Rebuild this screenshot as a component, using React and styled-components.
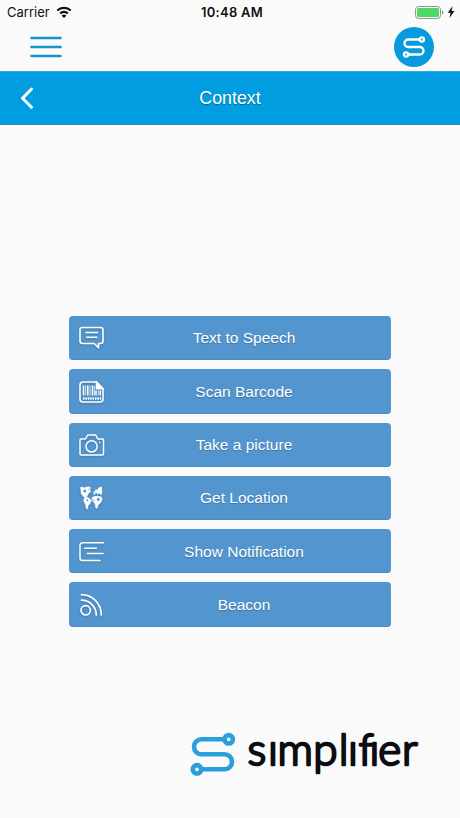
import React from 'react';
import styled, { createGlobalStyle } from 'styled-components';

const GlobalStyle = createGlobalStyle`
  * {
    box-sizing: border-box;
  }

  body {
    margin: 0;
    background: #fafafa;
    font-family: "Liberation Sans", Arial, sans-serif;
  }
`;

const Screen = styled.div`
  display: flex;
  flex-direction: column;
  width: 460px;
  height: 818px;
  overflow: hidden;
  background: #fafafa;
`;

const StatusBar = styled.div`
  display: grid;
  grid-template-columns: 1fr auto 1fr;
  align-items: center;
  height: 24px;
  padding: 0 5px 0 7px;
  color: #111;
  font-family: Inter, sans-serif;
  font-size: 13px;
  line-height: 24px;
`;

const Carrier = styled.div`
  display: flex;
  align-items: center;
  gap: 6px;
`;

const Clock = styled.div`
  padding-left: 2px;
  font-weight: 600;
  letter-spacing: 0.25px;
`;

const Power = styled.div`
  display: flex;
  align-items: center;
  justify-content: flex-end;
  gap: 3px;
`;

const TopBar = styled.header`
  display: flex;
  align-items: center;
  justify-content: space-between;
  height: 47px;
  padding: 0 26px 1px 30px;
`;

const PlainButton = styled.button`
  display: flex;
  padding: 0;
  border: 0;
  background: none;
`;

const Badge = styled.div`
  display: flex;
  align-items: center;
  justify-content: center;
  width: 40px;
  height: 40px;
  border-radius: 50%;
  background: #079bdb;
`;

const TitleBar = styled.div`
  display: grid;
  grid-template-columns: 40px 1fr 40px;
  align-items: center;
  height: 54px;
  border-top: 1px solid #35a9d8;
  border-bottom: 1px solid #3f87ab;
  background: #009de0;
`;

const BackButton = styled(PlainButton)`
  padding-left: 20px;
`;

const Title = styled.h1`
  margin: 0;
  color: #fff;
  font-size: 17.8px;
  font-weight: 400;
  text-align: center;
  text-shadow: 0 1px 1px rgba(0, 0, 0, 0.35);
`;

const Actions = styled.main`
  display: flex;
  flex-direction: column;
  gap: 9px;
  padding: 191px 69px 0;
`;

const Action = styled.button`
  display: grid;
  grid-template-columns: 28px 1fr;
  align-items: center;
  height: 44.3px;
  padding: 1.5px 9px 0;
  border: 0;
  border-bottom: 1px solid #4a8cc5;
  border-radius: 4px;
  background: #5396cf;
  color: #fff;
  font-family: inherit;
  font-size: 15.5px;
  text-shadow: 0 1px 1px rgba(0, 0, 0, 0.25);

  svg {
    filter: drop-shadow(0 1px 1px rgba(0, 0, 0, 0.2));
  }
`;

const Footer = styled.footer`
  display: flex;
  justify-content: flex-end;
  margin-top: auto;
  padding: 0 30px 26px 0;
`;

const Line = styled.svg`
  display: block;
  fill: none;
  stroke: ${props => props.$color || '#fff'};
  stroke-width: ${props => props.$weight || 1.6};
  stroke-linecap: round;
  stroke-linejoin: round;
`;

const Wordmark = styled.text`
  fill: #0b0d12;
  stroke: #0b0d12;
  stroke-width: 2.5px;
  font-family: Lato, sans-serif;
  font-size: 44px;
  font-weight: 300;
  font-variant-ligatures: none;
`;

const SpeechIcon = () => (
  <Line width="28" height="28" viewBox="0 0 28 28">
    <path d="M4.500 3.500h18a2.500 2.500 0 0 1 2.500 2.500v11a2.500 2.500 0 0 1-2.500 2.500h-2v4.300l-4.300-4.300H4.500A2.500 2.500 0 0 1 2 17V6a2.500 2.500 0 0 1 2.500-2.500z" />
    <path d="M8 8.500h11.500M8.800 13.300h10" />
  </Line>
);

const BarcodeIcon = () => (
  <Line width="28" height="28" viewBox="0 0 28 28">
    <path d="M5 4h13.500l6.500 6.700V21a3 3 0 0 1-3 3H5a3 3 0 0 1-3-3V7a3 3 0 0 1 3-3z" />
    <path d="M18.500 4v6.700H25z" fill="#fff" />
    <path d="M5.500 7.500v10M9.800 7.500v10M14.500 7.500v10M18 12.500v5M22.300 12.500v5" strokeWidth="1.500" strokeLinecap="butt" />
    <path d="M7.700 7.500v10M12.100 7.500v10M16.400 8v9.500M20.300 12.500v5" strokeWidth="0.800" strokeLinecap="butt" />
    <path d="M5 20.500h18" strokeWidth="2.400" strokeDasharray="1.500 0.900" strokeLinecap="butt" />
  </Line>
);

const CameraIcon = () => (
  <Line width="28" height="28" viewBox="0 0 28 28" $weight={1.5}>
    <path d="M3 8h4.500l2.200-4h8l2.200 4h4.600a1 1 0 0 1 1 1v14a1 1 0 0 1-1 1H3a1 1 0 0 1-1-1V9a1 1 0 0 1 1-1z" />
    <circle cx="13.600" cy="15.400" r="5.600" />
    <path d="M21.800 11.300h.1" />
  </Line>
);

const MapIcon = () => (
  <Line width="28" height="28" viewBox="0 0 28 28" $weight={0.5}>
    <g fill="#fff">
      <path d="M2.300 3.500l2.200-.6L6 4l1.700-.8 3.500-.4 1.500 1-1 2.200 1 1.500-2 1.500L9 12.200l-1 1.500-1.800-.2-3-3.700L3 6.500z" />
      <path d="M6.200 14.500l3-1.200 3 1.700 1 1.700-1.400 3-1.800 2-.5 3.300-1.200-.3-.8-4.500-1.800-3z" />
      <path d="M15.500 9l2.500-3.500 1.300 1L20.500 4l3-1.200.5 5.200-.8 3-2.200-2-1.200 1.200-1.300-1.200-2 1.500z" />
      <path d="M14.500 13.300l3.500-1.300 5.200.8 1 3-2 3.500-2 1.500-1 3.500-1.400-.3-.8-4.300-3-3.200z" />
    </g>
    <g fill="#5396cf" stroke="#fff" strokeWidth="1.100">
      <circle cx="6.800" cy="7" r="2.100" />
      <circle cx="20.300" cy="15.500" r="2" />
      <circle cx="9.300" cy="16.300" r="1.500" />
    </g>
    <path d="M3 12.500l2 2.500M10.500 5.500l.7-.7M17.300 9.500l.9-1.300M15 16l1.500.8" stroke="#5396cf" strokeWidth="0.900" />
  </Line>
);

const NotificationIcon = () => (
  <Line width="28" height="28" viewBox="0 0 28 28" $weight={1.5}>
    <path d="M25.300 4.700H4.500A2.500 2.500 0 0 0 2 7.200v12.800a2.500 2.500 0 0 0 2.500 2.500H22M6.800 10.200h11.500M9.300 15.500h15.800" />
  </Line>
);

const BeaconIcon = () => (
  <Line width="28" height="28" viewBox="0 0 28 28" $weight={1.7}>
    <circle cx="7.700" cy="19.300" r="4.700" />
    <path d="M3.500 9.200c8.200 0 14.800 6.600 14.800 14.800M3.500 3.700c11 0 19.800 9 19.800 20.300" />
  </Line>
);

const SimplifierMark = () => (
  <g>
    <path d="M34.500 7.300h-23a7.500 7.500 0 0 0 0 15h23a7.500 7.500 0 0 1 0 15H11.500" />
    <circle cx="38.700" cy="7.300" r="4.200" />
    <circle cx="7" cy="37.300" r="4.200" />
  </g>
);

const ACTIONS = [
  { label: 'Text to Speech', Icon: SpeechIcon },
  { label: 'Scan Barcode', Icon: BarcodeIcon },
  { label: 'Take a picture', Icon: CameraIcon },
  { label: 'Get Location', Icon: MapIcon },
  { label: 'Show Notification', Icon: NotificationIcon },
  { label: 'Beacon', Icon: BeaconIcon },
];

const App = () => (
  <Screen>
    <GlobalStyle />
    <StatusBar>
      <Carrier>
        Carrier
        <Line width="16" height="13" viewBox="0 0 16 13" $color="#111" $weight={2.3}>
          <path d="M1.300 4.500a9.600 9.600 0 0 1 13.400 0M4.200 7.500a5.500 5.500 0 0 1 7.600 0" strokeLinecap="butt" />
          <path d="M8 12L5.700 9.700a3.200 3.200 0 0 1 4.600 0z" fill="#111" stroke="none" />
        </Line>
      </Carrier>
      <Clock>10:48 AM</Clock>
      <Power>
        <svg width="29" height="13" viewBox="0 0 29 13">
          <rect x="0.500" y="0.500" width="25" height="12" rx="3" fill="#fafafa" stroke="#8f958f" />
          <rect x="2" y="2" width="22" height="9" rx="1.500" fill="#4cd964" />
          <path d="M27 4.500c2 .8 2 3.200 0 4z" fill="#8f958f" />
        </svg>
        <svg width="8" height="12" viewBox="0 0 8 12">
          <path d="M5.500 0L.8 6.700h2.800L2.500 12 7.500 5H4.600z" fill="#111" />
        </svg>
      </Power>
    </StatusBar>
    <TopBar>
      <PlainButton type="button" aria-label="Menu">
        <Line width="32" height="22" viewBox="0 0 32 22" $color="#1593ce" $weight={2.6}>
          <path d="M1.500 2h29M1.500 11h29M1.500 20h29" />
        </Line>
      </PlainButton>
      <Badge>
        <Line width="24" height="24" viewBox="-1 -1.700 48 48" $weight={4.6}>
          <SimplifierMark />
        </Line>
      </Badge>
    </TopBar>
    <TitleBar>
      <BackButton type="button" aria-label="Back">
        <Line width="14" height="24" viewBox="0 0 14 24" $weight={3}>
          <path d="M11.500 3L2.500 12.300l9 9" />
        </Line>
      </BackButton>
      <Title>Context</Title>
    </TitleBar>
    <Actions>
      {ACTIONS.map(({ label, Icon }) => (
        <Action key={label} type="button">
          <Icon />
          <span>{label}</span>
        </Action>
      ))}
    </Actions>
    <Footer>
      <Line width="240" height="76" viewBox="0 -16 240 76" $color="#2a9fdb" $weight={4.6}>
        <SimplifierMark />
        <Wordmark x="57.500 78 87.500 123.300 148.700 158 168.700 179.500 188.300 212" y="33.200">sımplıfıer</Wordmark>
      </Line>
    </Footer>
  </Screen>
);

export default App;
